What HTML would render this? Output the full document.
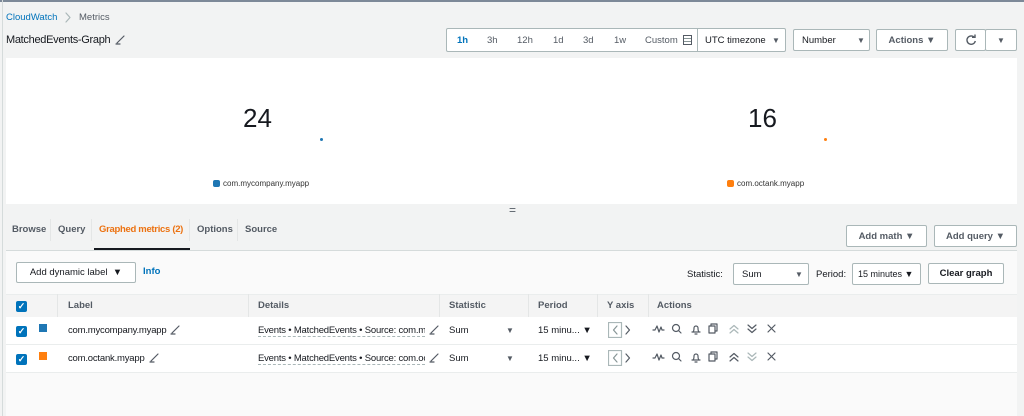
<!DOCTYPE html><html><head><style>
*{box-sizing:border-box;margin:0;padding:0}
body{width:1024px;height:416px;overflow:hidden;background:#f2f3f3;font-family:"Liberation Sans",sans-serif;font-size:9.5px;color:#16191f;position:relative}
.a{position:absolute;white-space:nowrap}
.btn{position:absolute;background:#fff;border:1px solid #aab7b8;border-radius:2px;font-weight:bold;color:#545b64;font-size:9.5px;display:flex;align-items:center;justify-content:center;white-space:nowrap}
.sel{position:absolute;background:#fff;border:1px solid #aab7b8;border-radius:2px;color:#16191f;font-size:9.5px;display:flex;align-items:center;padding-left:8px;white-space:nowrap}
.tri{position:absolute;font-size:8px;color:#545b64}
.th{font-weight:bold;color:#545b64}
.sep{position:absolute;width:1px;background:#e4e6e6}
.cb{position:absolute;width:11px;height:11px;background:#0073bb;border-radius:2px;color:#fff;font-size:9px;line-height:11px;text-align:center;font-weight:bold}
svg.i{position:absolute;fill:none;stroke:#545b64;stroke-width:1.2;stroke-linecap:round;stroke-linejoin:round}
</style></head><body>
<div class="a" style="left:0;top:0;width:1024px;height:2px;background:#7d8998"></div>
<div class="a" style="left:2px;top:0;width:1px;height:416px;background:#d5dbdb"></div>
<div class="a" style="left:6px;top:12px;color:#0073bb">CloudWatch</div>
<svg class="i" style="left:64px;top:12px;stroke:#aab7b8" width="8" height="11"><path d="M2 1l4 4.5L2 10"/></svg>
<div class="a" style="left:79px;top:12px;color:#545b64">Metrics</div>
<div class="a" style="left:6px;top:34px;font-size:11px;letter-spacing:-0.3px">MatchedEvents-Graph</div>
<svg class="i" style="left:115px;top:34px" width="11" height="11"><path d="M2 9l7-7M1 10h4"/></svg>
<div class="a" style="left:446px;top:28px;width:340px;height:24px;background:#fff;border:1px solid #aab7b8;border-radius:2px"></div>
<div class="a" style="left:457px;top:35px;color:#0073bb;font-weight:bold">1h</div>
<div class="a" style="left:487px;top:35px;color:#545b64">3h</div>
<div class="a" style="left:517px;top:35px;color:#545b64">12h</div>
<div class="a" style="left:553px;top:35px;color:#545b64">1d</div>
<div class="a" style="left:583px;top:35px;color:#545b64">3d</div>
<div class="a" style="left:614px;top:35px;color:#545b64">1w</div>
<div class="a" style="left:645px;top:35px;color:#545b64">Custom</div>
<div class="a" style="left:683px;top:35px;width:9px;height:10px;border:1px solid #545b64;background:repeating-linear-gradient(#fff 0 2px,#879596 2px 3px)"></div>
<div class="a" style="left:697px;top:28px;width:1px;height:24px;background:#aab7b8"></div>
<div class="a" style="left:705px;top:35px">UTC timezone</div><div class="tri" style="left:772px;top:36px">▼</div>
<div class="sel" style="left:793px;top:29px;width:77px;height:22px">Number</div><div class="tri" style="left:857px;top:36px">▼</div>
<div class="btn" style="left:876px;top:29px;width:72px;height:22px">Actions ▼</div>
<div class="btn" style="left:955px;top:29px;width:31px;height:22px"><svg width="12" height="12" style="fill:none;stroke:#545b64;stroke-width:1.4"><path d="M9.5 3.5A4.2 4.2 0 1 0 10.3 7"/><path d="M7 3.3h3V0.5" /></svg></div>
<div class="btn" style="left:985px;top:29px;width:32px;height:22px;font-size:8px">▼</div>
<div class="a" style="left:6px;top:58px;width:1011px;height:146px;background:#fff"></div>
<div class="a" style="left:243px;top:103px;font-size:26px">24</div>
<div class="a" style="left:320px;top:138px;width:3px;height:3px;border-radius:50%;background:#1f77b4"></div>
<div class="a" style="left:213px;top:180px;width:7px;height:7px;border-radius:2px;background:#1f77b4"></div>
<div class="a" style="left:223px;top:179px;font-size:8px;color:#333">com.mycompany.myapp</div>
<div class="a" style="left:748px;top:103px;font-size:26px">16</div>
<div class="a" style="left:824px;top:138px;width:3px;height:3px;border-radius:50%;background:#ff7f0e"></div>
<div class="a" style="left:727px;top:180px;width:7px;height:7px;border-radius:2px;background:#ff7f0e"></div>
<div class="a" style="left:737px;top:179px;font-size:8px;color:#333">com.octank.myapp</div>
<div class="a" style="left:509px;top:203px;font-size:12px;color:#545b64">=</div>
<div class="a th" style="left:12px;top:224px">Browse</div>
<div class="sep" style="left:50px;top:219px;height:22px"></div>
<div class="a th" style="left:58px;top:224px">Query</div>
<div class="sep" style="left:91px;top:219px;height:22px"></div>
<div class="a" style="left:99px;top:224px;font-weight:bold;color:#ec7211;letter-spacing:-0.3px">Graphed metrics (2)</div>
<div class="sep" style="left:189px;top:219px;height:22px"></div>
<div class="a th" style="left:197px;top:224px">Options</div>
<div class="sep" style="left:237px;top:219px;height:22px"></div>
<div class="a th" style="left:245px;top:224px">Source</div>
<div class="a" style="left:94px;top:248px;width:96px;height:2px;background:#16191f"></div>
<div class="btn" style="left:846px;top:225px;width:81px;height:22px">Add math ▼</div>
<div class="btn" style="left:934px;top:225px;width:83px;height:22px">Add query ▼</div>
<div class="a" style="left:6px;top:250px;width:1011px;height:166px;background:#fafafa;border-top:1px solid #d5dbdb"></div>
<div class="btn" style="left:16px;top:262px;width:120px;height:21px;color:#16191f;font-weight:normal">Add dynamic label &nbsp;▼</div>
<div class="a" style="left:143px;top:266px;color:#0073bb;font-weight:bold">Info</div>
<div class="a" style="left:687px;top:269px">Statistic:</div>
<div class="sel" style="left:733px;top:263px;width:76px;height:22px">Sum</div><div class="tri" style="left:795px;top:270px">▼</div>
<div class="a" style="left:816px;top:269px">Period:</div>
<div class="sel" style="left:852px;top:263px;width:69px;height:22px;padding-left:5px;font-size:9px">15 minutes ▼</div>
<div class="btn" style="left:928px;top:263px;width:76px;height:21px;color:#16191f">Clear graph</div>
<div class="a" style="left:6px;top:294px;width:1011px;height:23px;background:#f4f4f4;border-top:1px solid #eaeded"></div>
<div class="a" style="left:6px;top:317px;width:1011px;height:55px;background:#fff"></div>
<div class="a" style="left:6px;top:344px;width:1011px;height:1px;background:#eaeded"></div>
<div class="a" style="left:6px;top:372px;width:1011px;height:1px;background:#eaeded"></div>
<div class="sep" style="left:57px;top:294px;height:23px"></div><div class="sep" style="left:248px;top:294px;height:23px"></div><div class="sep" style="left:439px;top:294px;height:23px"></div><div class="sep" style="left:528px;top:294px;height:23px"></div><div class="sep" style="left:597px;top:294px;height:23px"></div><div class="sep" style="left:648px;top:294px;height:23px"></div>
<div class="cb" style="left:16px;top:301px">✓</div>
<div class="a th" style="left:68px;top:300px">Label</div>
<div class="a th" style="left:258px;top:300px">Details</div>
<div class="a th" style="left:449px;top:300px">Statistic</div>
<div class="a th" style="left:538px;top:300px">Period</div>
<div class="a th" style="left:607px;top:300px">Y axis</div>
<div class="a th" style="left:657px;top:300px">Actions</div>

<div class="cb" style="left:16px;top:326px">✓</div>
<div class="a" style="left:39px;top:324px;width:8px;height:8px;background:#1f77b4"></div>
<div class="a" style="left:68px;top:325px;letter-spacing:-0.2px">com.mycompany.myapp</div>
<svg class="i" style="left:170px;top:324px" width="11" height="11"><path d="M2 9l7-7M1 10h4"/></svg>
<div class="a" style="left:258px;top:325px;width:167px;overflow:hidden;border-bottom:1px dashed #aab7b8;letter-spacing:-0.2px">Events • MatchedEvents • Source: com.my</div>
<svg class="i" style="left:429px;top:324px" width="11" height="11"><path d="M2 9l7-7M1 10h4"/></svg>
<div class="a" style="left:449px;top:325px">Sum</div><div class="tri" style="left:506px;top:326px">▼</div>
<div class="a" style="left:538px;top:325px">15 minu... ▼</div>
<svg class="i" style="left:608px;top:322px" width="26" height="16"><rect x="0.5" y="0.5" width="13" height="15" stroke="#aab7b8"/><path d="M9 4l-3.5 4L9 12" stroke="#879596"/><path d="M18 4l3.5 4L18 12"/></svg>
<svg class="i" style="left:652px;top:322px" width="130" height="14"><path d="M1 8h2l2-4 2 6 2-5 1 3h2"/><circle cx="24" cy="6" r="3.5"/><path d="M26.5 8.5l2.5 2.5"/><path d="M40 10h8M41 10c1-1 1-3 1-4a2 2 0 0 1 4 0c0 1 0 3 1 4M43 12h2"/><rect x="57" y="4" width="6" height="7"/><path d="M59 4V2h6v7h-2"/><path d="M78 7l4-3.5 4 3.5M78 11l4-3.5 4 3.5" stroke="#aab7b8"/><path d="M96 3l4 3.5 4-3.5M96 7l4 3.5 4-3.5"/><path d="M116 3l7 7M123 3l-7 7"/></svg>

<div class="cb" style="left:16px;top:354px">✓</div>
<div class="a" style="left:39px;top:352px;width:8px;height:8px;background:#ff7f0e"></div>
<div class="a" style="left:68px;top:353px;letter-spacing:-0.2px">com.octank.myapp</div>
<svg class="i" style="left:149px;top:352px" width="11" height="11"><path d="M2 9l7-7M1 10h4"/></svg>
<div class="a" style="left:258px;top:353px;width:167px;overflow:hidden;border-bottom:1px dashed #aab7b8;letter-spacing:-0.2px">Events • MatchedEvents • Source: com.oc</div>
<svg class="i" style="left:429px;top:352px" width="11" height="11"><path d="M2 9l7-7M1 10h4"/></svg>
<div class="a" style="left:449px;top:353px">Sum</div><div class="tri" style="left:506px;top:354px">▼</div>
<div class="a" style="left:538px;top:353px">15 minu... ▼</div>
<svg class="i" style="left:608px;top:350px" width="26" height="16"><rect x="0.5" y="0.5" width="13" height="15" stroke="#aab7b8"/><path d="M9 4l-3.5 4L9 12" stroke="#879596"/><path d="M18 4l3.5 4L18 12"/></svg>
<svg class="i" style="left:652px;top:350px" width="130" height="14"><path d="M1 8h2l2-4 2 6 2-5 1 3h2"/><circle cx="24" cy="6" r="3.5"/><path d="M26.5 8.5l2.5 2.5"/><path d="M40 10h8M41 10c1-1 1-3 1-4a2 2 0 0 1 4 0c0 1 0 3 1 4M43 12h2"/><rect x="57" y="4" width="6" height="7"/><path d="M59 4V2h6v7h-2"/><path d="M78 7l4-3.5 4 3.5M78 11l4-3.5 4 3.5"/><path d="M96 3l4 3.5 4-3.5M96 7l4 3.5 4-3.5" stroke="#aab7b8"/><path d="M116 3l7 7M123 3l-7 7"/></svg>
</body></html>
